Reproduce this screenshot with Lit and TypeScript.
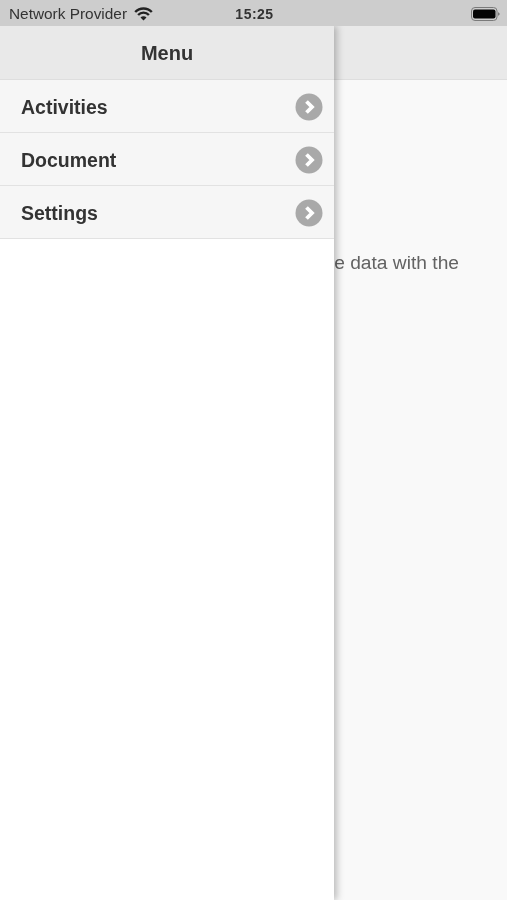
import { LitElement, html, css } from "lit";
import { customElement } from "lit/decorators.js";

@customElement("app-root")
export class AppRoot extends LitElement {
  static styles = css`
    :host { display: block; width: 507px; height: 900px; font-family: "Liberation Sans", Arial, sans-serif; color: #333; overflow: hidden; }
    .screen { position: relative; display: flex; flex-direction: column; width: 507px; height: 900px; background: #f9f9f9; overflow: hidden; filter: blur(0.35px); }
    .status { position: relative; z-index: 3; flex: none; display: grid; grid-template-columns: 1fr auto 1fr; align-items: center; height: 26px; padding: 1px 7px 0 9px; box-sizing: border-box; background: #cdcdcd; font-size: 15.4px; color: #333; }
    .left { display: flex; align-items: center; gap: 7px; }
    .time { font-weight: 700; font-size: 14px; color: #333; letter-spacing: 0.5px; }
    .right { display: flex; justify-content: flex-end; }
    .topbar { flex: none; height: 54px; box-sizing: border-box; background: #e9e9e9; border-bottom: 1px solid #dedede; }
    .content { flex: 1; display: flex; justify-content: flex-end; padding: 172px 48px 0 0; background: #f9f9f9; }
    .content p { margin: 0; font-size: 19.2px; line-height: 21px; color: #636363; white-space: nowrap; }
    .drawer { position: absolute; z-index: 2; left: 0; top: 26px; bottom: 0; width: 334px; background: #fff; box-shadow: 3px 0 7px rgba(0, 0, 0, 0.25); display: flex; flex-direction: column; }
    .head { flex: none; height: 54px; box-sizing: border-box; padding-top: 1px; display: flex; align-items: center; justify-content: center; background: #e9e9e9; border-bottom: 1px solid #dedede; font-weight: 700; font-size: 20px; color: #333; }
    .row { flex: none; height: 53px; box-sizing: border-box; display: flex; align-items: center; justify-content: space-between; padding: 2px 11px 0 21px; background: #f6f6f6; border-bottom: 1px solid #e2e2e2; font-weight: 700; font-size: 19.5px; color: #333; }
    .row svg { display: block; }
  `;

  private chevron() {
    return html`<svg width="28" height="28" viewBox="0 0 28 28" aria-hidden="true">
      <circle cx="14" cy="14" r="13.5" fill="#a9a9a9"></circle>
      <path d="M11.5 8.5 L17 14 L11.5 19.5" fill="none" stroke="#fff" stroke-width="3.8"></path>
    </svg>`;
  }

  render() {
    const items = ["Activities", "Document", "Settings"];
    return html`
      <div class="screen">
        <div class="status">
          <div class="left">
            <span>Network Provider</span>
            <svg width="19" height="14" viewBox="0 0 19 14" aria-hidden="true">
              <path d="M1.2 5 A11.5 11.5 0 0 1 17.8 5" fill="none" stroke="#222" stroke-width="2.4"></path>
              <path d="M4.1 8 A7.4 7.4 0 0 1 14.9 8" fill="none" stroke="#222" stroke-width="2.4"></path>
              <path d="M9.5 13.6 L6.5 10.5 A4.2 4.2 0 0 1 12.5 10.5 Z" fill="#222"></path>
            </svg>
          </div>
          <div class="time">15:25</div>
          <div class="right">
            <svg width="29" height="14" viewBox="0 0 29 14" aria-hidden="true">
              <rect x="0.5" y="0.5" width="25.5" height="13" rx="3.5" fill="none" stroke="#7a7a7a"></rect>
              <rect x="2" y="2.5" width="22.5" height="9" rx="2" fill="#050505"></rect>
              <path d="M27 5 L29 7 L27 9 Z" fill="#7a7a7a"></path>
            </svg>
          </div>
        </div>
        <div class="topbar"></div>
        <div class="content"><p>Synchronize the data with the</p></div>
        <nav class="drawer">
          <div class="head">Menu</div>
          ${items.map((t) => html`<div class="row"><span>${t}</span>${this.chevron()}</div>`)}
        </nav>
      </div>
    `;
  }
}
